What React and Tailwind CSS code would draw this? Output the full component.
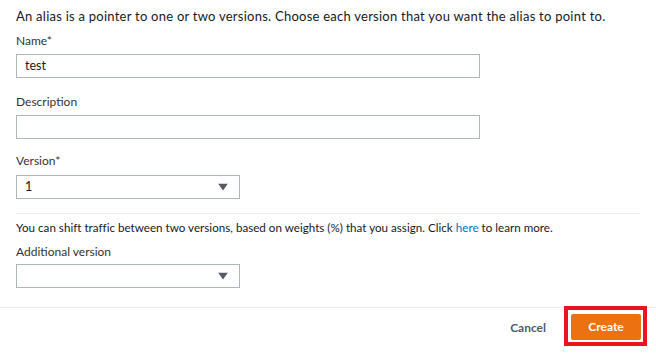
export default function App() {
    const Caret = () => (
        <svg width="10" height="7" viewBox="0 0 10 7" className="absolute right-[11px] top-1/2 -translate-y-1/2">
            <path d="M0 0 H10 L5 7 Z" fill="#545b64" />
        </svg>
    );

    return (
        <div className="w-[656px] h-[353px] bg-white text-[#16191f] flex flex-col font-['Lato',sans-serif]">
            <div className="px-4 pt-[8px]">
                {/* intro */}
                <p className="text-[13px] leading-4 tracking-[0.25px]">
                    An alias is a pointer to one or two versions. Choose each version that you want the alias to point to.
                </p>

                <label className="block mt-[9px] text-[12px] leading-4 text-[#333]">Name*</label>
                <div className="mt-[5px] w-[464px] h-[24px] border border-[#aab7b8] flex items-center px-[8px] text-[12.5px]">
                    test
                </div>

                <label className="block mt-[16px] text-[12px] leading-4 text-[#333]">Description</label>
                <div className="mt-[5px] w-[464px] h-[24px] border border-[#aab7b8]" />

                <label className="block mt-[14px] text-[12px] leading-4 text-[#333]">Version*</label>
                <div className="relative mt-[6px] w-[224px] h-[24px] border border-[#aab7b8] flex items-center px-[8px] text-[12.5px]">
                    1
                    <Caret />
                </div>

                <div className="mt-[14px] border-t border-[#eaeded]" />

                <p className="mt-[6px] text-[11.6px] leading-4 tracking-[0.02px]">
                    You can shift traffic between two versions, based on weights (%) that you assign. Click{" "}
                    <a className="text-[#0073bb]">here</a> to learn more.
                </p>

                <label className="block mt-[8px] text-[12px] leading-4 text-[#333]">Additional version</label>
                <div className="relative mt-[4px] w-[224px] h-[24px] border border-[#aab7b8]">
                    <Caret />
                </div>
            </div>

            {/* footer */}
            <div className="mt-[19px] border-t border-[#eaeded] flex items-start justify-end pr-[9px]">
                <button className="mt-[11px] mr-[18px] text-[12px] font-bold text-[#545b64]">Cancel</button>
                <div className="-mt-[2px] border-[4px] border-[#e8141f] p-[3px] pb-[2px] pr-[2px]">
                    <button className="w-[70px] h-[26px] bg-[#ec7211] text-white text-[12px] font-bold rounded-[2px]">
                        Create
                    </button>
                </div>
            </div>
        </div>
    );
}
